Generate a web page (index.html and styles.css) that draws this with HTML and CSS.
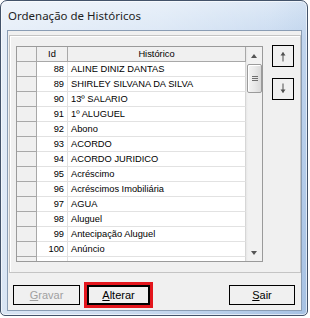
FILE: index.html
```html
<!DOCTYPE html>
<html lang="pt-BR">
<head>
<meta charset="utf-8">
<title>Ordenação de Históricos</title>
<link rel="stylesheet" href="styles.css">
</head>
<body>
<div class="window">
  <div class="titlebar"><span class="title">Ordenação de Históricos</span></div>
  <div class="client">
    <div class="panel">
      <div class="grid">
        <div class="grid-body">
          <div class="row header"><div class="c ind"></div><div class="c id">Id</div><div class="c hist">Histórico</div></div>
          <div class="row"><div class="c ind"></div><div class="c id">88</div><div class="c hist">ALINE DINIZ DANTAS</div></div>
          <div class="row"><div class="c ind"></div><div class="c id">89</div><div class="c hist">SHIRLEY SILVANA DA SILVA</div></div>
          <div class="row"><div class="c ind"></div><div class="c id">90</div><div class="c hist">13º SALARIO</div></div>
          <div class="row"><div class="c ind"></div><div class="c id">91</div><div class="c hist">1º ALUGUEL</div></div>
          <div class="row"><div class="c ind"></div><div class="c id">92</div><div class="c hist">Abono</div></div>
          <div class="row"><div class="c ind"></div><div class="c id">93</div><div class="c hist">ACORDO</div></div>
          <div class="row"><div class="c ind"></div><div class="c id">94</div><div class="c hist">ACORDO JURIDICO</div></div>
          <div class="row"><div class="c ind"></div><div class="c id">95</div><div class="c hist">Acréscimo</div></div>
          <div class="row"><div class="c ind"></div><div class="c id">96</div><div class="c hist">Acréscimos Imobiliária</div></div>
          <div class="row"><div class="c ind"></div><div class="c id">97</div><div class="c hist">AGUA</div></div>
          <div class="row"><div class="c ind"></div><div class="c id">98</div><div class="c hist">Aluguel</div></div>
          <div class="row"><div class="c ind"></div><div class="c id">99</div><div class="c hist">Antecipação Aluguel</div></div>
          <div class="row"><div class="c ind"></div><div class="c id">100</div><div class="c hist">Anúncio</div></div>
          <div class="row partial"><div class="c ind"></div><div class="c id"></div><div class="c hist"></div></div>
        </div>
        <div class="scrollbar">
          <div class="sb-btn"><span class="tri up"></span></div>
          <div class="sb-thumb"><span class="grip"></span></div>
          <div class="sb-track"></div>
          <div class="sb-btn"><span class="tri down"></span></div>
        </div>
      </div>
      <div class="arrows">
        <button class="arrow-btn" type="button" aria-label="Subir">
          <svg width="20" height="20" viewBox="0 0 20 20"><path d="M10 6.5V15.5" stroke="#505050" stroke-width="1" fill="none"/><path d="M7.5 9.5L10 6L12.5 9.5Z" fill="#505050"/></svg>
        </button>
        <button class="arrow-btn" type="button" aria-label="Descer">
          <svg width="20" height="20" viewBox="0 0 20 20"><path d="M10 4.5V13.5" stroke="#505050" stroke-width="1" fill="none"/><path d="M7.5 10.5L10 14L12.5 10.5Z" fill="#505050"/></svg>
        </button>
      </div>
    </div>
    <div class="footer">
      <button class="btn disabled" type="button"><u>G</u>ravar</button>
      <span class="highlight"><button class="btn default" type="button"><u>A</u>lterar</button></span>
      <button class="btn sair" type="button"><u>S</u>air</button>
    </div>
  </div>
</div>
</body>
</html>
```
FILE: styles.css
```css
html, body {
  margin: 0;
  padding: 0;
  background: #ffffff;
}

.window {
  box-sizing: border-box;
  width: 308px;
  height: 316px;
  border: 1px solid #43536a;
  border-radius: 7px 7px 5px 5px;
  padding: 0 5px 4px 6px;
  display: flex;
  flex-direction: column;
  background:
    linear-gradient(100deg, rgba(255,255,255,0.55) 0%, rgba(255,255,255,0.35) 45%, rgba(255,255,255,0.05) 75%, rgba(120,160,210,0.25) 100%),
    linear-gradient(to bottom, #dce8f6 0%, #c8daf0 12%, #bfd4ee 60%, #b6cde9 100%);
  box-shadow: inset 0 0 0 1px rgba(255,255,255,0.6);
}

.titlebar {
  height: 29px;
  display: flex;
  align-items: center;
  padding-left: 1px;
  padding-bottom: 1px;
  box-sizing: border-box;
}

.title {
  font-family: "Noto Sans", "Open Sans", sans-serif;
  font-size: 11.5px;
  color: #1e1e1e;
  letter-spacing: 0;
}

.client {
  flex: 1;
  display: flex;
  flex-direction: column;
  background: #f0f0f0;
  border: 1px solid #8a9db4;
}

.panel {
  box-sizing: border-box;
  height: 238px;
  margin: 4px 0 0 1px;
  border: 1px solid #c4c4c4;
  box-shadow: inset 1px 1px 0 #ffffff;
  display: flex;
  padding: 10px 0 0 6px;
}

.grid {
  box-sizing: border-box;
  width: 247px;
  height: 216px;
  border: 1px solid #9a9a9a;
  display: flex;
  background: #ffffff;
}

.grid-body {
  width: 229px;
  display: flex;
  flex-direction: column;
  overflow: hidden;
}

.row {
  display: grid;
  grid-template-columns: 20px 31px 178px;
  height: 15px;
  flex: none;
}

.row.partial {
  height: 4px;
}

.c {
  box-sizing: border-box;
  border-right: 1px solid #e2e2e2;
  border-bottom: 1px solid #e2e2e2;
  font-family: "Liberation Sans", Arial, sans-serif;
  font-size: 9.3px;
  line-height: 14px;
  color: #000000;
  white-space: nowrap;
  overflow: hidden;
}

.c.ind {
  background: #f0f0f0;
  border-right-color: #a8a8a8;
  border-bottom-color: #a8a8a8;
}

.c.id {
  text-align: right;
  padding-right: 3px;
}

.c.hist {
  padding-left: 3px;
  border-right-color: #d6d6d6;
}

.row.partial .c {
  border-bottom: none;
}

.row.header .c {
  background: #f0f0f0;
  border-right-color: #a8a8a8;
  border-bottom-color: #a8a8a8;
  text-align: center;
  padding: 0;
}

.scrollbar {
  width: 16px;
  display: flex;
  flex-direction: column;
  background: linear-gradient(to right, #e6e6e6 0, #f1f1f1 2px, #f1f1f1 100%);
}

.sb-btn {
  height: 17px;
  display: flex;
  align-items: center;
  justify-content: center;
  flex: none;
}

.tri {
  width: 0;
  height: 0;
  border-left: 3.5px solid transparent;
  border-right: 3.5px solid transparent;
}

.tri.up {
  border-bottom: 4px solid #555555;
}

.tri.down {
  border-top: 4px solid #555555;
}

.sb-thumb {
  box-sizing: border-box;
  height: 29px;
  margin: 0 0 0 1px;
  width: 15px;
  border: 1px solid #9b9b9b;
  border-radius: 2px;
  background: linear-gradient(to right, #f4f4f4 0%, #e9e9e9 50%, #d9d9d9 100%);
  box-shadow: inset 1px 1px 0 #ffffff;
  display: flex;
  align-items: center;
  justify-content: center;
  flex: none;
}

.grip {
  width: 6px;
  height: 5px;
  background: repeating-linear-gradient(to bottom, #6f6f6f 0, #6f6f6f 1px, transparent 1px, transparent 2px);
}

.sb-track {
  flex: 1;
}

.arrows {
  display: flex;
  flex-direction: column;
  gap: 11px;
  margin-left: 9px;
  margin-top: -1px;
}

.arrow-btn {
  box-sizing: border-box;
  width: 22px;
  height: 22px;
  padding: 0;
  margin: 0;
  border: 1px solid #000000;
  background: #f0f0f0;
  display: flex;
  align-items: center;
  justify-content: center;
}

.arrow-btn svg {
  display: block;
}

.footer {
  display: flex;
  align-items: flex-start;
  padding: 12px 6px 0 5px;
}

.btn {
  box-sizing: border-box;
  height: 20px;
  width: 67px;
  margin: 0;
  padding: 0;
  border: 1px solid #000000;
  background: #f0f0f0;
  font-family: "Liberation Sans", Arial, sans-serif;
  font-size: 11px;
  color: #000000;
  display: flex;
  align-items: center;
  justify-content: center;
}

.btn u {
  text-decoration: underline;
}

.btn.disabled {
  color: #a0a0a0;
}

.highlight {
  display: flex;
  margin: -3px 0 0 4px;
  border: 3px solid #e3161d;
}

.btn.default {
  width: 63px;
  border-width: 2px;
}

.btn.sair {
  width: 66px;
  margin-left: auto;
}
```
